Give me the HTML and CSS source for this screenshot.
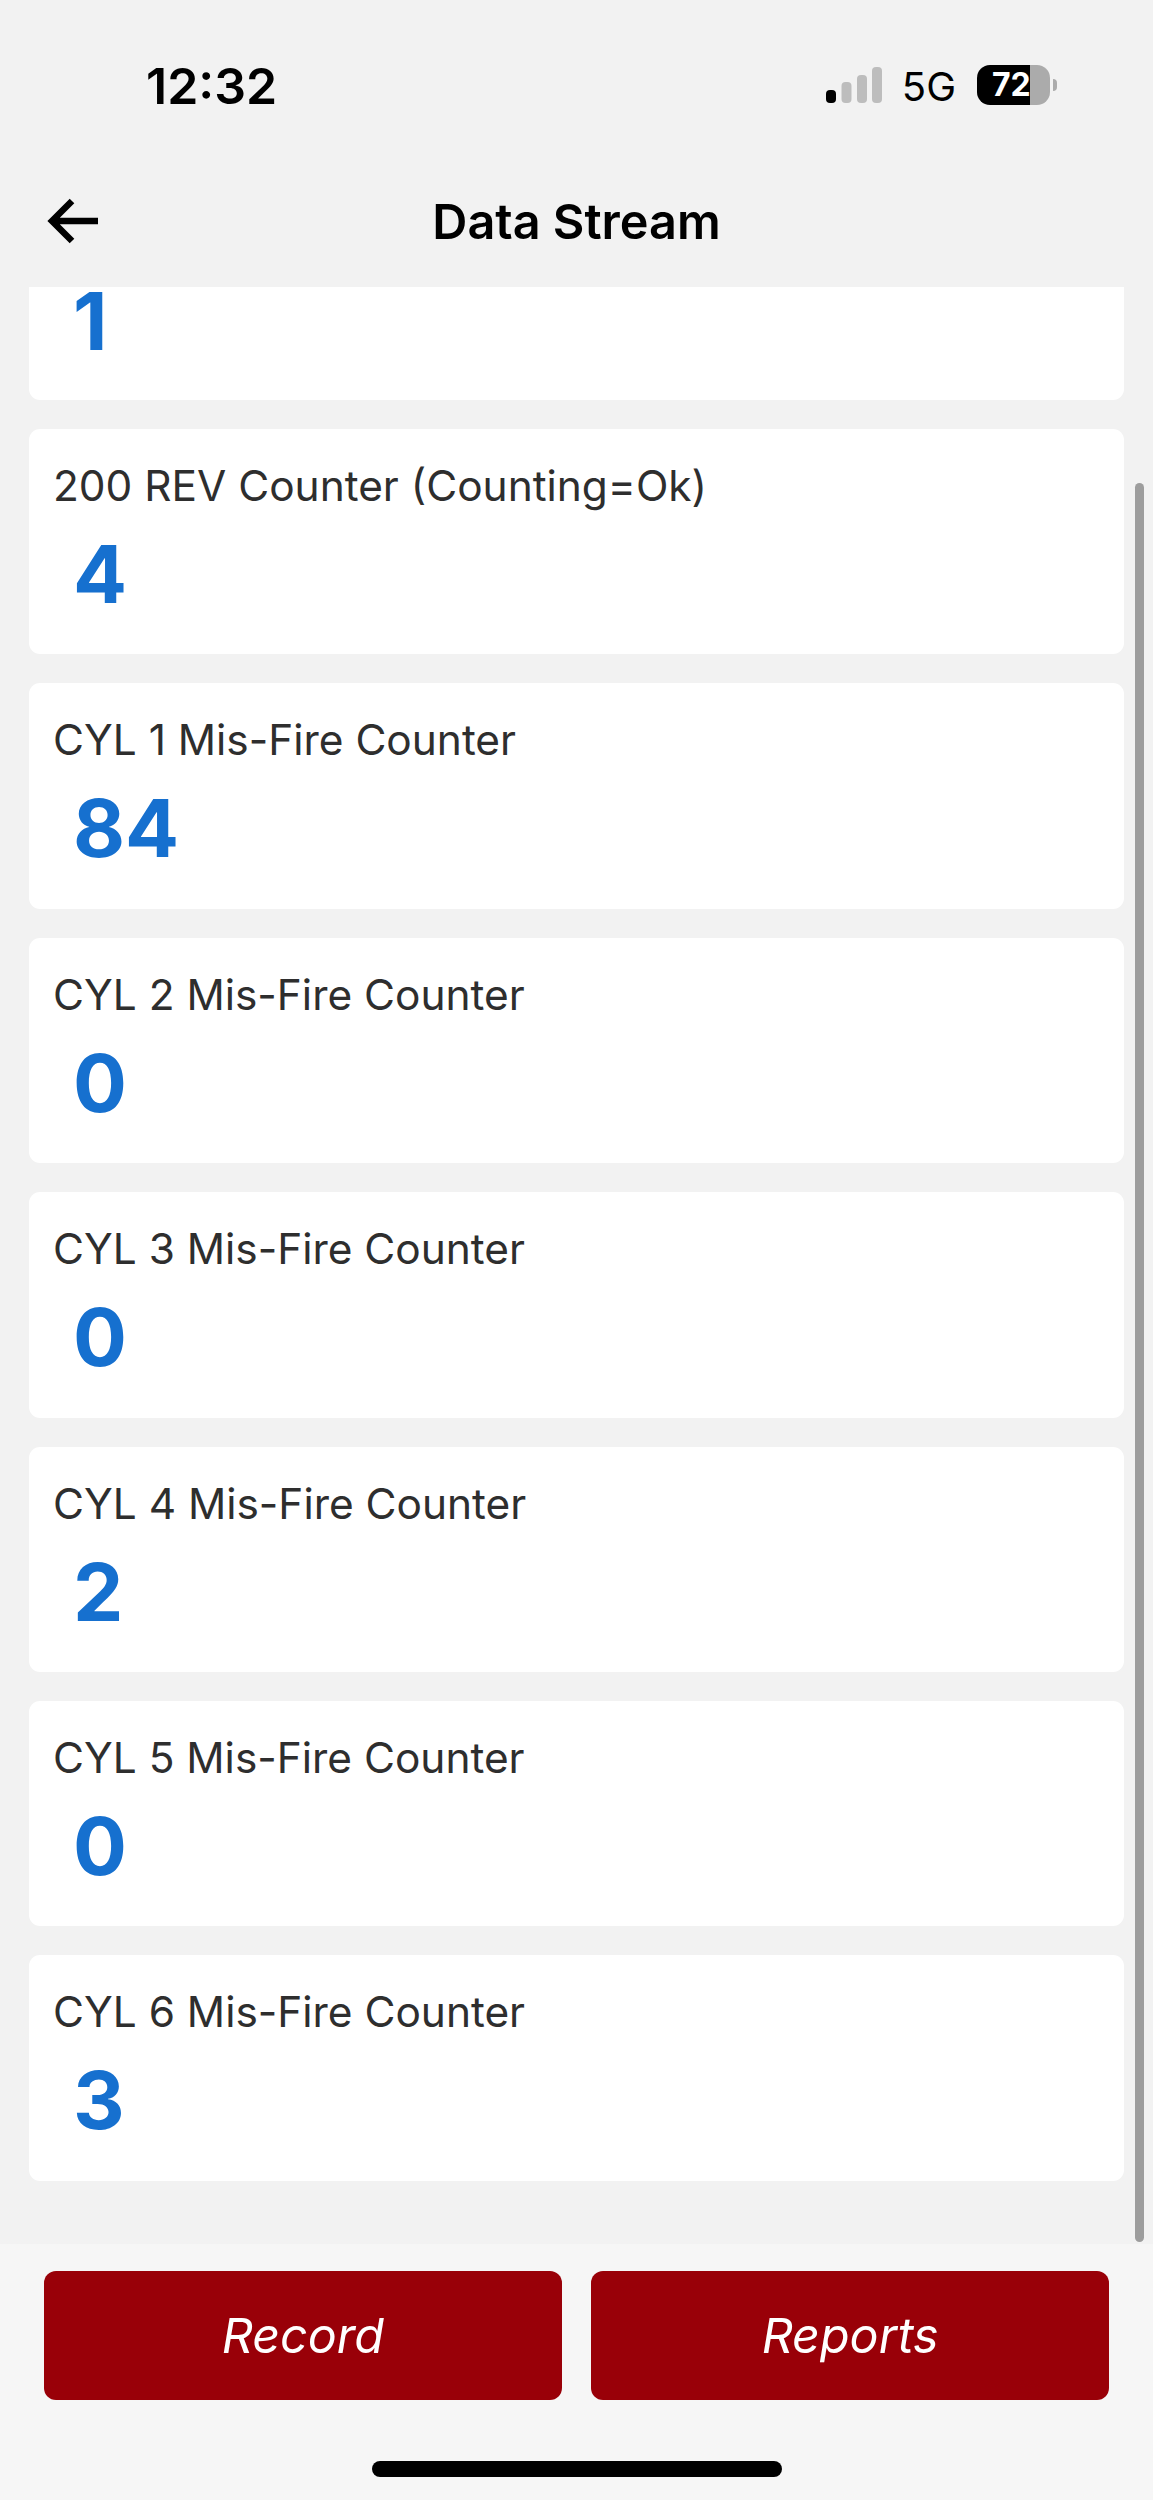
FILE: index.html
```html
<!DOCTYPE html>
<html lang="en">
<head>
<meta charset="utf-8">
<title>Data Stream</title>
<link rel="stylesheet" href="styles.css">
</head>
<body>
<div class="phone">
  <div class="status">
    <span class="time">12:32</span>
    <div class="status-right">
      <svg class="signal" width="56" height="36" viewBox="0 0 56 36">
        <rect x="0" y="23" width="10" height="13" rx="4" fill="#000"/>
        <rect x="15.5" y="15" width="10" height="21" rx="4" fill="#bdbdbd"/>
        <rect x="31" y="8" width="10" height="28" rx="4" fill="#bdbdbd"/>
        <rect x="46" y="0" width="10" height="36" rx="4" fill="#bdbdbd"/>
      </svg>
      <span class="net">5G</span>
      <div class="battery">
        <div class="battery-body"><span class="battery-text">72</span></div>
        <span class="battery-tip"></span>
      </div>
    </div>
  </div>
  <header class="nav">
    <svg class="back" width="54" height="46" viewBox="0 0 54 46">
      <path d="M52 23H6M26 3L6 23l20 20" fill="none" stroke="#000" stroke-width="6.5"/>
    </svg>
    <h1 class="title">Data Stream</h1>
  </header>
  <main class="list">
    <div class="cards">
      <section class="card card-clipped"><div class="value">1</div></section>
      <section class="card"><div class="label">200 REV Counter (Counting=Ok)</div><div class="value">4</div></section>
      <section class="card"><div class="label">CYL 1 Mis-Fire Counter</div><div class="value">84</div></section>
      <section class="card"><div class="label">CYL 2 Mis-Fire Counter</div><div class="value">0</div></section>
      <section class="card"><div class="label">CYL 3 Mis-Fire Counter</div><div class="value">0</div></section>
      <section class="card"><div class="label">CYL 4 Mis-Fire Counter</div><div class="value">2</div></section>
      <section class="card"><div class="label">CYL 5 Mis-Fire Counter</div><div class="value">0</div></section>
      <section class="card"><div class="label">CYL 6 Mis-Fire Counter</div><div class="value">3</div></section>
    </div>
    <div class="scrollbar"></div>
  </main>
  <footer class="footer">
    <div class="actions">
      <button class="action">Record</button>
      <button class="action">Reports</button>
    </div>
    <div class="home"></div>
  </footer>
</div>
</body>
</html>
```
FILE: styles.css
```css
* { box-sizing: border-box; }
html, body { margin: 0; padding: 0; }
body { background: #f2f2f2; font-family: Inter, "Liberation Sans", sans-serif; }
.phone { width: 1153px; height: 2500px; display: flex; flex-direction: column; overflow: hidden; }

.status { height: 170px; flex: none; padding: 58px 96px 0 146px; display: flex; justify-content: space-between; align-items: flex-start; }
.time { font-size: 50px; font-weight: 600; line-height: 56px; color: #000; }
.status-right { display: flex; align-items: center; height: 46px; margin-top: 4px; }
.signal { display: block; }
.net { font-size: 40px; font-weight: 400; line-height: 42px; margin-left: 20px; margin-top: 4px; color: #000; }
.battery { display: flex; align-items: center; margin-left: 21px; }
.battery-body { width: 73px; height: 40px; border-radius: 13px; background: linear-gradient(90deg, #000 0, #000 72.6%, #ababab 72.6%, #ababab 100%); padding-left: 15px; }
.battery-text { display: block; font-size: 32px; font-weight: 700; line-height: 40px; color: #fff; }
.battery-tip { width: 4px; height: 12px; margin-left: 3px; background: #ababab; border-radius: 0 5px 5px 0; }

.nav { height: 117px; flex: none; position: relative; display: flex; align-items: flex-start; justify-content: center; padding-top: 24px; }
.back { position: absolute; left: 46px; top: 28px; }
.title { margin: 0; font-size: 48.6px; line-height: 56px; font-weight: 600; color: #000; }

.list { flex: none; height: 1957px; position: relative; padding: 0 29px; }
.cards { display: flex; flex-direction: column; gap: 29px; }
.card { background: #fff; border-radius: 11px; height: 225.4px; padding: 26px 24px 0; }
.card-clipped { height: 113px; padding-top: 4px; border-radius: 0 0 11px 11px; }
.label { font-size: 42.4px; line-height: 62px; font-weight: 400; color: #2e2e2e; }
.value { font-size: 80px; line-height: 90px; font-weight: 700; color: #1670cf; padding-left: 20px; margin-top: 12px; }
.card-clipped .value { margin-top: 0; line-height: 60px; padding-left: 20px; }
.scrollbar { position: absolute; left: 1135px; top: 196px; width: 9px; height: 1759px; background: #9d9d9d; border-radius: 5px; }

.footer { flex: 1; background: #f6f6f6; padding: 27px 44px 0; }
.actions { display: flex; gap: 29.5px; }
.action { flex: 1; height: 129px; border: 0; border-radius: 12px; background: #990008; color: #fff; font-family: Inter, "Liberation Sans", sans-serif; font-size: 48.4px; font-style: italic; font-weight: 400; }
.home { width: 410px; height: 16px; border-radius: 8px; background: #000; margin: 61px auto 0; }
```
